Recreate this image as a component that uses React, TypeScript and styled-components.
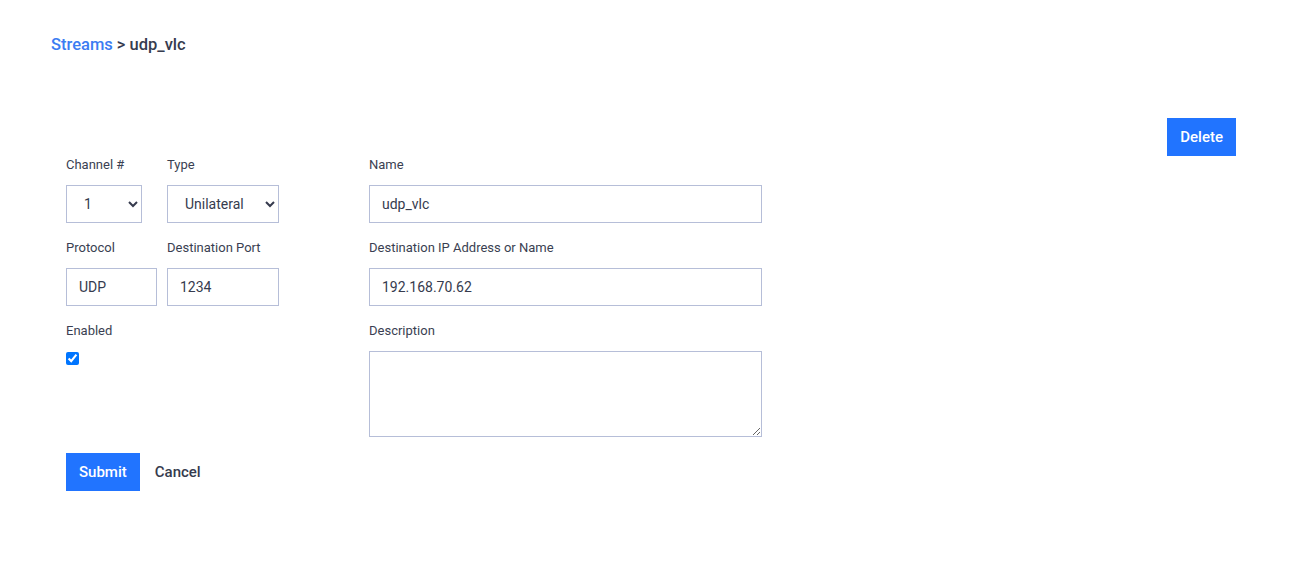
import React, { useState } from "react";
import styled, { createGlobalStyle } from "styled-components";

const GlobalStyle = createGlobalStyle`
  html, body {
    margin: 0;
    padding: 0;
    background: #ffffff;
  }
  body {
    font-family: Roboto, "Liberation Sans", sans-serif;
    color: #363b4e;
  }
  * {
    box-sizing: border-box;
  }
`;

const Page = styled.div`
  padding: 35px 60px 40px 51px;
`;

const Breadcrumb = styled.nav`
  font-size: 16.5px;
  font-weight: 500;
  line-height: 20px;
  color: #363b4e;

  a {
    color: #3b7cf2;
    text-decoration: none;
  }
`;

const Panel = styled.section`
  padding: 63px 15px 0 15px;
`;

const Toolbar = styled.div`
  display: flex;
  justify-content: flex-end;
`;

const Button = styled.button<{ $variant?: "primary" | "link" }>`
  height: 38px;
  padding: 0 13px;
  border: none;
  border-radius: 0;
  font-family: inherit;
  font-size: 15px;
  font-weight: 500;
  cursor: pointer;
  background: ${(p) => (p.$variant === "link" ? "transparent" : "#2174ff")};
  color: ${(p) => (p.$variant === "link" ? "#363b4e" : "#ffffff")};
`;

const FormGrid = styled.form`
  display: grid;
  grid-template-columns: 101px 202px 393px;
  row-gap: 16px;
  align-items: start;
`;

const Field = styled.div`
  display: flex;
  flex-direction: column;
  align-items: flex-start;
`;

const Label = styled.label`
  font-size: 13px;
  line-height: 18px;
  margin-bottom: 11px;
  color: #3a3f52;
`;

const controlBase = `
  height: 38px;
  border: 1px solid #b6bed8;
  border-radius: 0;
  background: #ffffff;
  font-family: Roboto, "Liberation Sans", sans-serif;
  font-size: 14px;
  color: #363b4e;
  outline: none;
`;

const Select = styled.select<{ $width: number }>`
  ${controlBase}
  width: ${(p) => p.$width}px;
  padding: 0 8px 0 13px;
`;

const Input = styled.input<{ $width?: number }>`
  ${controlBase}
  width: ${(p) => (p.$width ? `${p.$width}px` : "100%")};
  padding: 0 12px;
`;

const TextArea = styled.textarea`
  ${controlBase}
  height: 86px;
  width: 100%;
  padding: 8px 12px;
  resize: vertical;
`;

const Check = styled.input`
  width: 13px;
  height: 13px;
  margin: 1px 0 0 0;
  accent-color: #0075ff;
`;

const Actions = styled.div`
  display: flex;
  align-items: center;
  gap: 2px;
  margin-top: 16px;
`;

export default function App() {
  const [name, setName] = useState("udp_vlc");
  const [ip, setIp] = useState("192.168.70.62");
  const [port, setPort] = useState("1234");
  const [enabled, setEnabled] = useState(true);
  const [desc, setDesc] = useState("");

  return (
    <>
      <GlobalStyle />
      <Page>
        <Breadcrumb>
          <a href="#">Streams</a> &gt; udp_vlc
        </Breadcrumb>
        <Panel>
          <Toolbar>
            <Button type="button">Delete</Button>
          </Toolbar>
          <FormGrid onSubmit={(e) => e.preventDefault()}>
            <Field>
              <Label>Channel #</Label>
              <Select $width={76} defaultValue="1">
                <option value="1">1</option>
                <option value="2">2</option>
                <option value="3">3</option>
              </Select>
            </Field>
            <Field>
              <Label>Type</Label>
              <Select $width={112} defaultValue="Unilateral">
                <option>Unilateral</option>
                <option>Bilateral</option>
              </Select>
            </Field>
            <Field>
              <Label>Name</Label>
              <Input value={name} onChange={(e) => setName(e.target.value)} />
            </Field>

            <Field>
              <Label>Protocol</Label>
              <Input $width={91} value="UDP" readOnly />
            </Field>
            <Field>
              <Label>Destination Port</Label>
              <Input $width={112} value={port} onChange={(e) => setPort(e.target.value)} />
            </Field>
            <Field>
              <Label>Destination IP Address or Name</Label>
              <Input value={ip} onChange={(e) => setIp(e.target.value)} />
            </Field>

            <Field>
              <Label>Enabled</Label>
              <Check
                type="checkbox"
                checked={enabled}
                onChange={(e) => setEnabled(e.target.checked)}
              />
            </Field>
            <div />
            <Field>
              <Label>Description</Label>
              <TextArea value={desc} onChange={(e) => setDesc(e.target.value)} />
            </Field>
          </FormGrid>
          <Actions>
            <Button type="submit">Submit</Button>
            <Button type="button" $variant="link">
              Cancel
            </Button>
          </Actions>
        </Panel>
      </Page>
    </>
  );
}
